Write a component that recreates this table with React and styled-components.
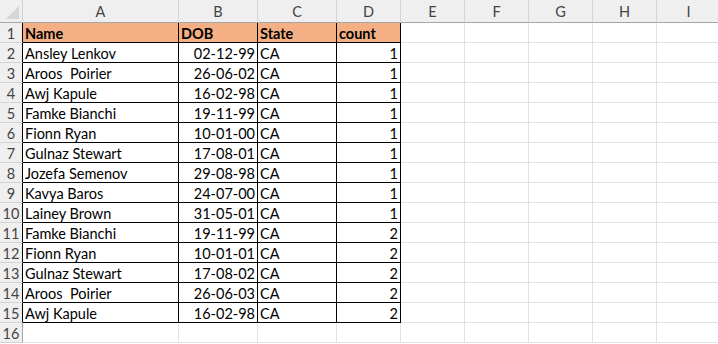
import React from 'react';
import styled, { createGlobalStyle } from 'styled-components';

const GlobalStyle = createGlobalStyle`
  html, body {
    margin: 0;
    padding: 0;
    background: #ffffff;
    overflow: hidden;
  }
  * {
    box-sizing: border-box;
  }
`;

const COLS = ['A', 'B', 'C', 'D', 'E', 'F', 'G', 'H', 'I'];
const WIDTHS = [156, 79, 79, 64, 64, 64, 64, 64, 64];

const rows = [
  ['Ansley Lenkov', '02-12-99', 'CA', 1],
  ['Aroos  Poirier', '26-06-02', 'CA', 1],
  ['Awj Kapule', '16-02-98', 'CA', 1],
  ['Famke Bianchi', '19-11-99', 'CA', 1],
  ['Fionn Ryan', '10-01-00', 'CA', 1],
  ['Gulnaz Stewart', '17-08-01', 'CA', 1],
  ['Jozefa Semenov', '29-08-98', 'CA', 1],
  ['Kavya Baros', '24-07-00', 'CA', 1],
  ['Lainey Brown', '31-05-01', 'CA', 1],
  ['Famke Bianchi', '19-11-99', 'CA', 2],
  ['Fionn Ryan', '10-01-01', 'CA', 2],
  ['Gulnaz Stewart', '17-08-02', 'CA', 2],
  ['Aroos  Poirier', '26-06-03', 'CA', 2],
  ['Awj Kapule', '16-02-98', 'CA', 2],
];

const Sheet = styled.div`
  display: grid;
  grid-template-columns: 23px ${WIDTHS.map(w => `${w}px`).join(' ')};
  grid-template-rows: 23px repeat(16, 20px);
  width: 718px;
  height: 344px;
  overflow: hidden;
  font-family: Lato, 'Liberation Sans', sans-serif;
  font-size: 14.5px;
  color: #000;
`;

const Corner = styled.div`
  position: relative;
  background: #efefef;
  border-right: 1px solid #d4d4d4;
  border-bottom: 1px solid #a6a6a6;
  &::after {
    content: '';
    position: absolute;
    right: 3px;
    bottom: 3px;
    width: 13px;
    height: 13px;
    background: #d6d6d6;
    clip-path: polygon(100% 0, 100% 100%, 0 100%);
  }
`;

const ColHead = styled.div`
  display: flex;
  align-items: center;
  justify-content: center;
  background: #efefef;
  color: #444;
  border-right: 1px solid #d4d4d4;
  border-bottom: 1px solid #a6a6a6;
  padding-top: 1px;
`;

const RowHead = styled.div`
  display: flex;
  align-items: center;
  justify-content: center;
  background: #efefef;
  color: #444;
  border-right: 1px solid ${p => (p.$edge ? '#000' : '#a6a6a6')};
  border-bottom: 1px solid #d4d4d4;
  padding-top: 1px;
`;

const Cell = styled.div`
  display: flex;
  align-items: center;
  justify-content: ${p => (p.$right ? 'flex-end' : 'flex-start')};
  padding: 1px 2px 0 2px;
  white-space: pre;
  overflow: hidden;
  font-weight: ${p => (p.$bold ? 700 : 400)};
  background: ${p => (p.$fill ? '#f4b084' : '#ffffff')};
  border-right: 1px solid ${p => (p.$table ? '#000' : '#e1e1e1')};
  border-bottom: 1px solid ${p => (p.$table ? '#000' : '#e1e1e1')};
`;

function App() {
  const header = ['Name', 'DOB', 'State', 'count'];
  const body = [];

  for (let r = 1; r <= 16; r++) {
    const inTable = r <= 15;
    body.push(
      <RowHead key={`rh${r}`} $edge={inTable}>
        {r}
      </RowHead>,
    );
    COLS.forEach((c, ci) => {
      let value = '';
      let right = false;
      const table = inTable && ci < 4;
      if (r === 1 && ci < 4) value = header[ci];
      else if (r > 1 && inTable && ci < 4) {
        value = rows[r - 2][ci];
        right = ci === 1 || ci === 3;
      }
      body.push(
        <Cell
          key={`${c}${r}`}
          $table={table}
          $fill={r === 1 && ci < 4}
          $bold={r === 1}
          $right={right}
        >
          {value}
        </Cell>,
      );
    });
  }

  return (
    <>
      <GlobalStyle />
      <Sheet>
        <Corner />
        {COLS.map(c => (
          <ColHead key={c}>{c}</ColHead>
        ))}
        {body}
      </Sheet>
    </>
  );
}

export default App;
